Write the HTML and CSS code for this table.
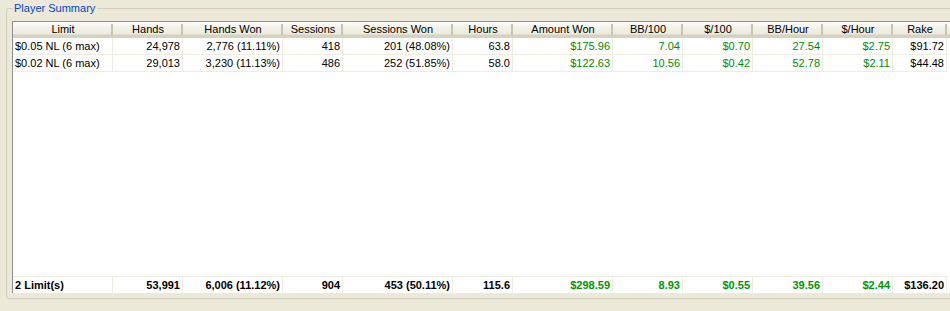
FILE: index.html
```html
<!DOCTYPE html>
<html>
<head>
<meta charset="utf-8">
<link rel="stylesheet" href="styles.css">
</head>
<body>
<div class="group">
  <div class="title">Player Summary</div>
  <div class="grid">
    <div class="row head">
      <div class="hc">Limit</div>
      <div class="hc">Hands</div>
      <div class="hc">Hands Won</div>
      <div class="hc">Sessions</div>
      <div class="hc">Sessions Won</div>
      <div class="hc">Hours</div>
      <div class="hc">Amount Won</div>
      <div class="hc">BB/100</div>
      <div class="hc">$/100</div>
      <div class="hc">BB/Hour</div>
      <div class="hc">$/Hour</div>
      <div class="hc">Rake</div>
      <div class="hc rest"></div>
    </div>
    <div class="row data">
      <div class="c l">$0.05 NL (6 max)</div>
      <div class="c">24,978</div>
      <div class="c">2,776 (11.11%)</div>
      <div class="c">418</div>
      <div class="c">201 (48.08%)</div>
      <div class="c">63.8</div>
      <div class="c g">$175.96</div>
      <div class="c g">7.04</div>
      <div class="c g">$0.70</div>
      <div class="c g">27.54</div>
      <div class="c g">$2.75</div>
      <div class="c">$91.72</div>
    </div>
    <div class="row data">
      <div class="c l">$0.02 NL (6 max)</div>
      <div class="c">29,013</div>
      <div class="c">3,230 (11.13%)</div>
      <div class="c">486</div>
      <div class="c">252 (51.85%)</div>
      <div class="c">58.0</div>
      <div class="c g">$122.63</div>
      <div class="c g">10.56</div>
      <div class="c g">$0.42</div>
      <div class="c g">52.78</div>
      <div class="c g">$2.11</div>
      <div class="c">$44.48</div>
    </div>
    <div class="filler"></div>
    <div class="row total">
      <div class="c l">2 Limit(s)</div>
      <div class="c">53,991</div>
      <div class="c">6,006 (11.12%)</div>
      <div class="c">904</div>
      <div class="c">453 (50.11%)</div>
      <div class="c">115.6</div>
      <div class="c g">$298.59</div>
      <div class="c g">8.93</div>
      <div class="c g">$0.55</div>
      <div class="c g">39.56</div>
      <div class="c g">$2.44</div>
      <div class="c">$136.20</div>
    </div>
  </div>
</div>
</body>
</html>
```
FILE: styles.css
```css
html, body {
  margin: 0;
  padding: 0;
}
body {
  width: 950px;
  height: 311px;
  overflow: hidden;
  background: #ECE9D8;
  font-family: "Liberation Sans", Arial, sans-serif;
  font-size: 11px;
  color: #000;
  padding: 8px 0 0 6px;
  box-sizing: border-box;
}
.group {
  width: 960px;
  height: 291px;
  box-sizing: border-box;
  border: 1px solid #D0D0BF;
  border-radius: 3px;
  padding: 0 0 5px 5px;
  display: flex;
  flex-direction: column;
}
.title {
  align-self: flex-start;
  margin: -7px 0 0 1px;
  padding: 0 2px 0 1px;
  height: 13px;
  line-height: 13px;
  background: #ECE9D8;
  color: #0046D5;
}
.grid {
  margin-top: 6px;
  flex: 1;
  background: #fff;
  border-top: 1px solid #8F8F8F;
  border-left: 1px solid #8F8F8F;
  display: flex;
  flex-direction: column;
  overflow: hidden;
}
.row {
  display: grid;
  grid-template-columns: 100px 70px 100px 60px 110px 60px 100px 70px 70px 70px 70px 54px 1fr;
}
.head {
  background: linear-gradient(#FFFFFF, #F3F2EA 40%, #EBEADB);
  border-bottom: 3px solid #D6D2C2;
  box-shadow: inset 0 -1px 0 #E2DECD;
  box-sizing: content-box;
  height: 13px;
}
.hc {
  text-align: center;
  line-height: 13px;
  padding-top: 1px;
  white-space: nowrap;
  background: linear-gradient(#C7C5B2, #C7C5B2) right 2px / 2px 11px no-repeat;
}
.hc.rest {
  background: none;
}
.data .c {
  height: 16px;
  line-height: 16px;
  border-right: 1px solid #EFEDE2;
  border-bottom: 1px solid #EFEDE2;
}
.c {
  text-align: right;
  padding: 0 2px 0 3px;
  white-space: nowrap;
  overflow: hidden;
}
.c.l {
  text-align: left;
  padding-left: 2px;
}
.g {
  color: #008C00;
}
.filler {
  flex: 1;
}
.total .c {
  font-weight: bold;
  height: 16px;
  line-height: 16px;
  border-top: 1px solid #EFEDE2;
  border-right: 1px solid #EFEDE2;
}
.total .g {
  color: #009600;
}
```
